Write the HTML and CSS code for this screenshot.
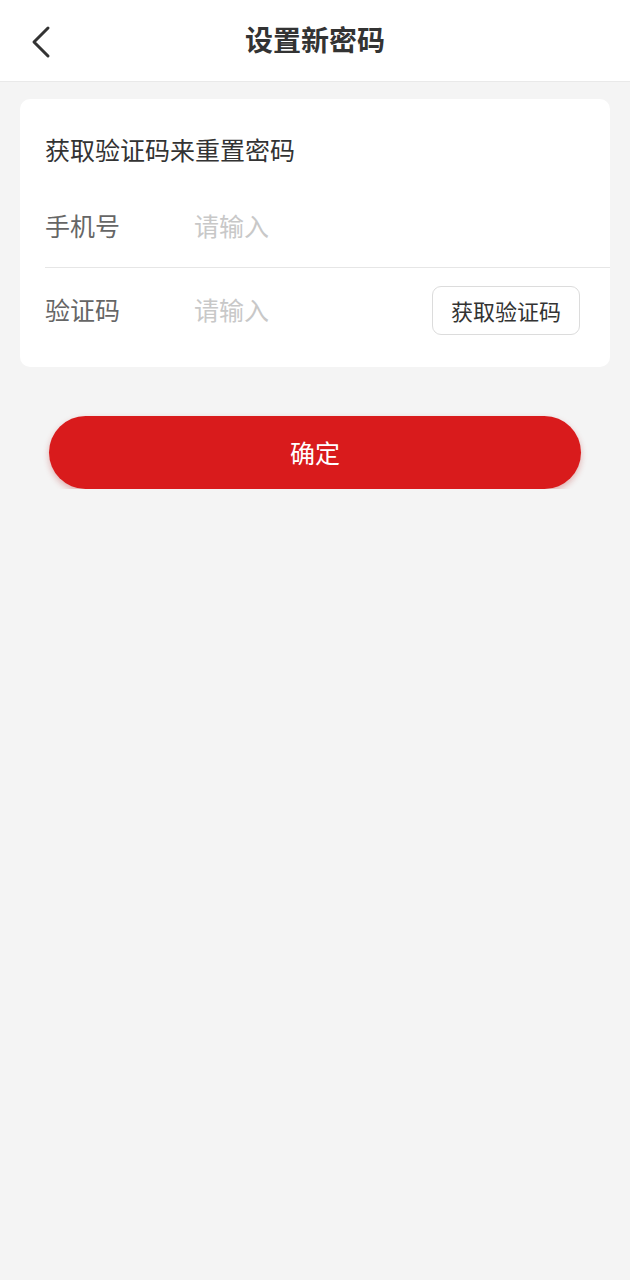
FILE: index.html
```html
<!DOCTYPE html>
<html lang="zh-CN">
<head>
<meta charset="utf-8">
<title>设置新密码</title>
<link rel="stylesheet" href="styles.css">
</head>
<body>
<header class="nav">
  <span class="back">
    <svg width="24" height="34" viewBox="0 0 24 34"><polyline points="18,3 4,17 18,31" fill="none" stroke="#333" stroke-width="3" stroke-linecap="round" stroke-linejoin="round"/></svg>
  </span>
  <h1 class="title">设置新密码</h1>
</header>
<main class="content">
  <section class="card">
    <p class="hint">获取验证码来重置密码</p>
    <div class="row row-first">
      <span class="label">手机号</span>
      <span class="placeholder">请输入</span>
    </div>
    <div class="row row-second">
      <span class="label">验证码</span>
      <span class="placeholder">请输入</span>
      <span class="code-btn">获取验证码</span>
    </div>
  </section>
  <div class="confirm">确定</div>
</main>
</body>
</html>
```

FILE: styles.css
```css
* { box-sizing: border-box; }
html, body {
  margin: 0;
  padding: 0;
  background: #f4f4f4;
  font-family: "Noto Sans CJK SC", "Noto Sans", sans-serif;
  color: #333;
}
.nav {
  height: 82px;
  background: #fff;
  border-bottom: 1px solid #e9e9e9;
  display: flex;
  align-items: center;
  justify-content: center;
  position: relative;
}
.back {
  position: absolute;
  left: 30px;
  top: 25px;
  width: 24px;
  height: 34px;
  display: flex;
}
.title {
  margin: 0;
  font-size: 28px;
  font-weight: 700;
  color: #333;
  line-height: 1;
  margin-top: -3px;
}
.content {
  padding: 17px 20px 0;
}
.card {
  background: #fff;
  border-radius: 10px;
  padding: 30px 0 14px 25px;
}
.hint {
  margin: 0 0 18px;
  font-size: 25px;
  line-height: 40px;
  color: #333;
}
.row {
  display: flex;
  align-items: center;
  padding-right: 30px;
}
.row-first {
  height: 81px;
  border-bottom: 1px solid #e6e6e6;
}
.row-second {
  height: 85px;
}
.label {
  width: 149px;
  font-size: 25px;
  color: #666;
  padding-bottom: 4px;
}
.placeholder {
  flex: 1;
  font-size: 25px;
  color: #c8c8c8;
  padding-bottom: 4px;
}
.code-btn {
  width: 148px;
  height: 49px;
  border: 1px solid #dcdcdc;
  border-radius: 9px;
  display: flex;
  align-items: center;
  justify-content: center;
  font-size: 22px;
  color: #333;
  padding-bottom: 2px;
}
.confirm {
  margin: 49px 29px 0;
  height: 73px;
  border-radius: 37px;
  background: #d91b1c;
  color: #fff;
  font-size: 25px;
  display: flex;
  align-items: center;
  justify-content: center;
  padding-bottom: 2px;
  box-shadow: 0 3px 6px rgba(180, 20, 20, 0.3);
}
```
